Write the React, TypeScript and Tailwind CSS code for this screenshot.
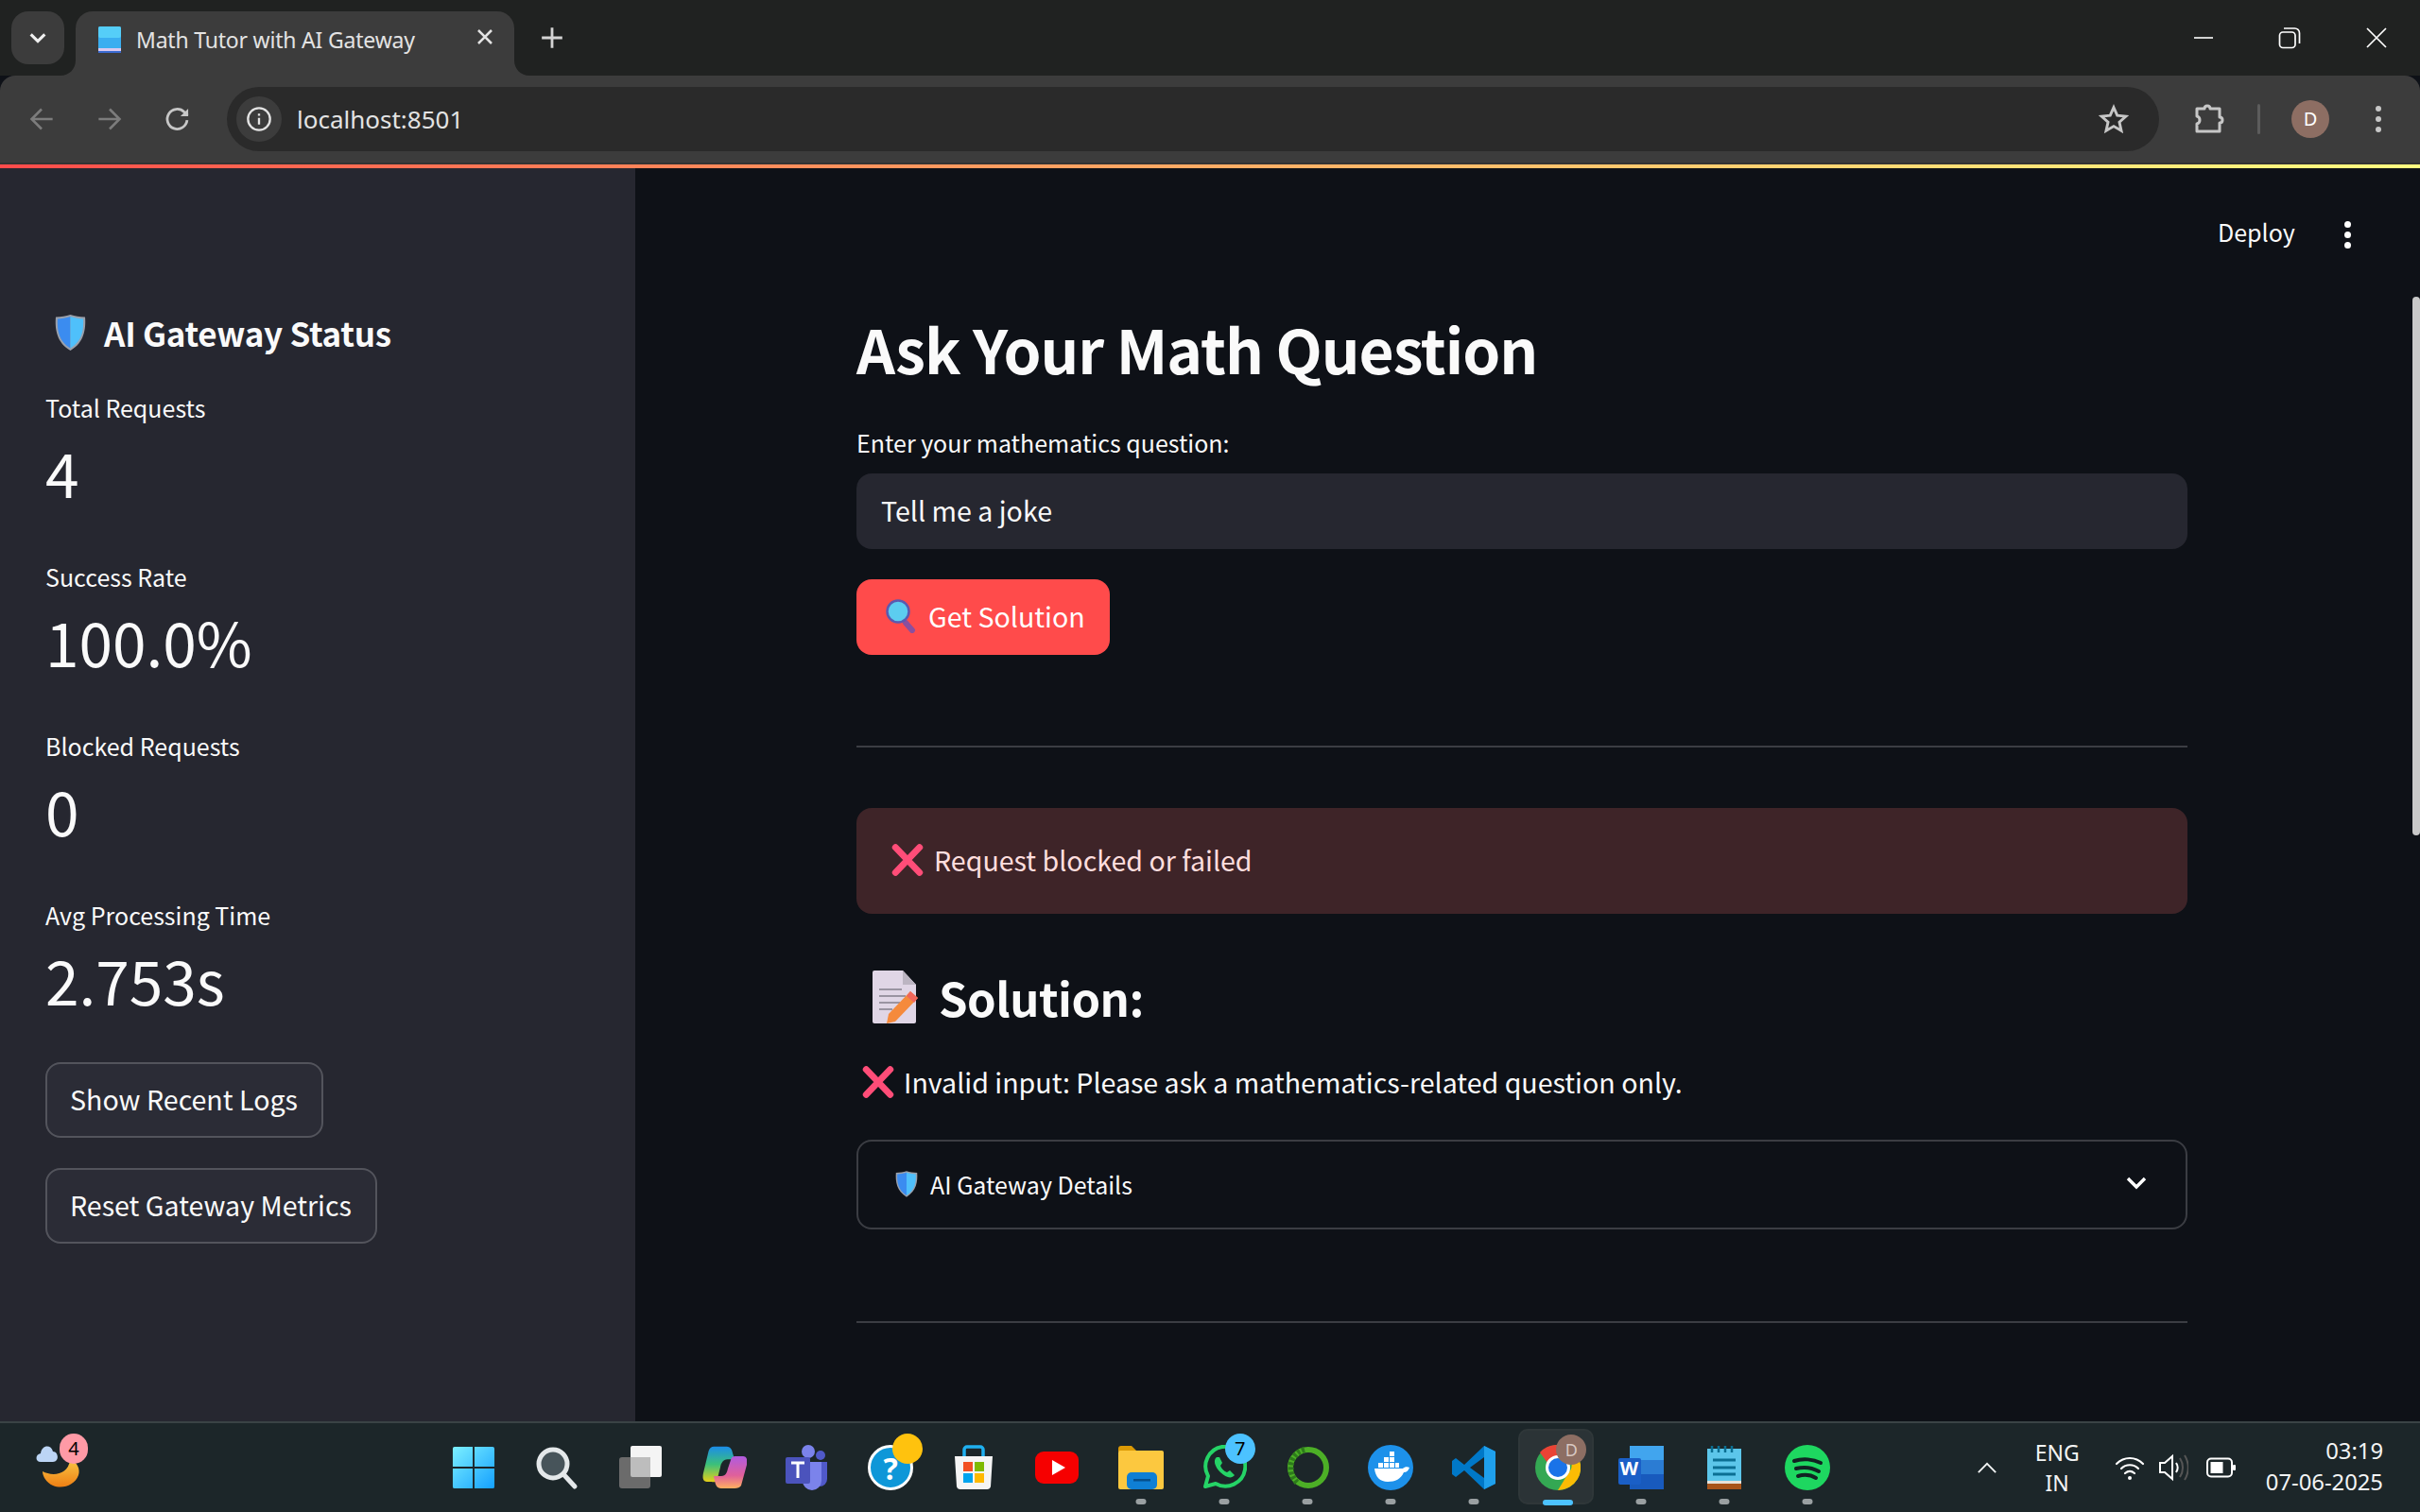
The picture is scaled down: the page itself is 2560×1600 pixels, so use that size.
import React from "react";

const S = "font-['Noto_Sans_CJK_SC',sans-serif]";
const W = "font-['Noto_Sans','Open_Sans',sans-serif]";

function Shield({ className }: { className?: string }) {
  return (
    <svg viewBox="0 0 34 40" className={className}>
      <path d="M17 .5 C22 2 27 3 33 3 C34 16 32 31 17 39.500 C2 31 0 16 1 3 C7 3 12 2 17 .5Z" fill="#9aa0ab" />
      <path d="M17 2.500 C12 4 7 5 3 5 C2.500 17 4 29 17 37Z" fill="#3b8cf0" />
      <path d="M17 2.500 C22 4 27 5 31 5 C31.500 17 30 29 17 37Z" fill="#4fc0fb" />
    </svg>
  );
}

function Cross({ className }: { className?: string }) {
  return (
    <svg viewBox="0 0 32 32" className={className}>
      <path d="M4 3.500 L28 28.500 M28 3.500 L4 28.500" stroke="#ff4d78" strokeWidth="6.5" strokeLinecap="round" fill="none" />
    </svg>
  );
}

function Metric({ label, value }: { label: string; value: string }) {
  return (
    <div className="h-[179px] flex flex-col">
      <div className="text-[25px] leading-[44px] text-[#fafafa]">{label}</div>
      <div className="text-[64px] leading-[93px] text-[#fafafa]">{value}</div>
    </div>
  );
}

function SideButton({ children }: { children: React.ReactNode }) {
  return (
    <div className="h-[80px] w-fit pl-[24px] pr-[25px] pb-[2px] flex items-center rounded-[16px] border-2 border-[#53545c] bg-[#2b2c36] text-[28.6px] leading-[40px] text-[#fafafa] whitespace-nowrap">
      {children}
    </div>
  );
}

function Divider() {
  return <div className="h-[2px] bg-[#3b3d43]" />;
}

function Dot({ on }: { on?: boolean }) {
  return on ? (
    <span className="absolute bottom-[7px] left-1/2 -translate-x-1/2 w-[32px] h-[6px] rounded-full bg-[#4cc2ff]" />
  ) : (
    <span className="absolute bottom-[8px] left-1/2 -translate-x-1/2 w-[11px] h-[6px] rounded-full bg-[#9aa0a2]" />
  );
}

function Badge({ color, text, left }: { color: string; text?: string; left: string }) {
  return (
    <span
      className={`absolute top-[11px] ${left} w-[32px] h-[32px] rounded-full flex items-center justify-center text-[20px] leading-none text-black ${color}`}
    >
      {text}
    </span>
  );
}

function Tile({ children, dot, on }: { children: React.ReactNode; dot?: boolean; on?: boolean }) {
  return (
    <div className="relative w-[88.2px] h-full flex items-center justify-center">
      {on && (
        <span className="absolute top-[6px] left-[3px] w-[80px] h-[80px] rounded-[10px] bg-[#2b3336] border-2 border-[#2f3739]" />
      )}
      {children}
      {dot && <Dot on={on} />}
    </div>
  );
}

const icon = "relative w-[48px] h-[48px]";

export default function App() {
  return (
    <div className={`w-[2560px] h-[1600px] overflow-hidden flex flex-col bg-[#0e1117] ${S}`}>
      {/* title bar */}
      <div className={`h-[80px] bg-[#202221] flex items-start ${W}`}>
        <div className="ml-[12px] mt-[12px] w-[56px] h-[56px] rounded-[18px] bg-[#3c3c3c] flex items-center justify-center">
          <svg viewBox="0 0 24 24" className="w-[22px] h-[22px]" fill="none" stroke="#f0f0f0" strokeWidth="3.4"><path d="M4 8l8 8 8-8" /></svg>
        </div>
        <div className="relative ml-[12px] mt-[12px] w-[464px] h-[68px] rounded-t-[18px] bg-[#3c3c3c] flex items-center pl-[24px] pb-[8px]">
          <svg viewBox="0 0 16 16" className="absolute left-[-16px] bottom-0 w-[16px] h-[16px]"><path d="M16 0 V16 H0 C9 16 16 9 16 0Z" fill="#3c3c3c" /></svg>
          <svg viewBox="0 0 16 16" className="absolute right-[-16px] bottom-0 w-[16px] h-[16px]"><path d="M0 0 V16 H16 C7 16 0 9 0 0Z" fill="#3c3c3c" /></svg>
          <svg viewBox="0 0 24 28" className="w-[24px] h-[28px] shrink-0">
            <rect x="0" y="0" width="24" height="28" rx="2" fill="#3aaef0" />
            <rect x="0" y="0" width="24" height="12" rx="2" fill="#55cef8" />
            <rect x="0" y="23" width="24" height="4" fill="#d9c9ef" />
            <rect x="0" y="26" width="24" height="2" fill="#3a6ad0" />
          </svg>
          <span className="ml-[16px] text-[23px] leading-[30px] text-[#e3e3e3] whitespace-nowrap tracking-[-0.2px]">Math Tutor with AI Gateway</span>
          <svg viewBox="0 0 20 20" className="absolute left-[423px] top-[17px] w-[20px] h-[20px]" stroke="#e3e3e3" strokeWidth="2.6" fill="none"><path d="M3 3l14 14M17 3L3 17" /></svg>
        </div>
        <svg viewBox="0 0 24 24" className="ml-[27px] mt-[27px] w-[26px] h-[26px]" stroke="#d4d4d4" strokeWidth="2.6" fill="none"><path d="M12 2v20M2 12h20" /></svg>
        <div className="ml-auto flex items-center h-[80px] pr-[34px]">
          <svg viewBox="0 0 24 24" className="w-[24px] h-[24px]" stroke="#fff" strokeWidth="1.6" fill="none"><path d="M2 12h20" /></svg>
          <svg viewBox="0 0 24 24" className="ml-[67px] w-[24px] h-[24px]" stroke="#fff" strokeWidth="1.7" fill="none"><rect x="1.5" y="6" width="16.5" height="16.5" rx="3.5" /><path d="M6 2h11.5A5 5 0 0 1 22.5 7v11" /></svg>
          <svg viewBox="0 0 24 24" className="ml-[68px] w-[24px] h-[24px]" stroke="#fff" strokeWidth="1.7" fill="none"><path d="M2 2l20 20M22 2L2 22" /></svg>
        </div>
      </div>
      {/* toolbar */}
      <div className={`h-[92px] bg-[#3c3c3c] rounded-t-[16px] flex items-center ${W}`}>
        <svg viewBox="0 0 24 24" className="ml-[30px] w-[28px] h-[28px]" stroke="#7c7c7c" strokeWidth="2.2" fill="none"><path d="M22 12H3M12 3l-9 9 9 9" /></svg>
        <svg viewBox="0 0 24 24" className="ml-[44px] w-[28px] h-[28px]" stroke="#7c7c7c" strokeWidth="2.2" fill="none"><path d="M2 12h19M12 3l9 9-9 9" /></svg>
        <svg viewBox="0 0 24 24" className="ml-[44px] w-[28px] h-[28px]" stroke="#c7c7c7" strokeWidth="2.4" fill="none"><path d="M20.5 13a9 9 0 1 1-2.6-7.4L21 8.5" /><path d="M21.5 2.5v7h-7" fill="#c7c7c7" stroke="none" /></svg>
        <div className="ml-[38px] w-[2044px] h-[68px] rounded-full bg-[#2a2a2a] flex items-center pl-[10px]">
          <div className="w-[48px] h-[48px] rounded-full bg-[#3c3c3c] flex items-center justify-center">
            <svg viewBox="0 0 24 24" className="w-[28px] h-[28px]" stroke="#e3e3e3" strokeWidth="2" fill="none"><circle cx="12" cy="12" r="10" /><path d="M12 11v6M12 7v2" /></svg>
          </div>
          <span className="ml-[16px] text-[26px] leading-[34px] text-[#e3e3e3]">localhost:8501</span>
          <svg viewBox="0 0 24 24" className="ml-auto mr-[32px] w-[32px] h-[32px]" stroke="#c7c7c7" strokeWidth="2.2" fill="none"><path d="M12 2.8l2.8 6.3 6.9.7-5.2 4.6 1.5 6.8-6-3.500-6 3.500 1.500-6.800-5.200-4.600 6.900-.7z" /></svg>
        </div>
        <svg viewBox="0 0 32 32" className="ml-[37px] w-[32px] h-[32px]" stroke="#c7c7c7" strokeWidth="3" fill="none"><path d="M3 5h8c0-4 6-4 6 0h10v9c4 0 4 6 0 6v9H3v-8c4-1 4-7 0-8z" strokeLinejoin="round" /></svg>
        <div className="ml-[35px] w-[3px] h-[32px] rounded-full bg-[#5c5c5c]" />
        <div className="ml-[33px] w-[40px] h-[40px] rounded-full bg-[#8d6e63] flex items-center justify-center text-[20px] text-white">D</div>
        <div className="ml-[49px] flex flex-col gap-[5px]">
          <span className="w-[6px] h-[6px] rounded-full bg-[#c7c7c7]" />
          <span className="w-[6px] h-[6px] rounded-full bg-[#c7c7c7]" />
          <span className="w-[6px] h-[6px] rounded-full bg-[#c7c7c7]" />
        </div>
      </div>
      <div className="h-[2px] bg-[#333333]" />
      <div className="h-[4px] bg-gradient-to-r from-[#ff4b4b] to-[#fffd80]" />
      {/* page */}
      <div className="relative flex-1 flex min-h-0">
        <aside className="w-[672px] bg-[#262730] pt-[147px] pl-[48px]">
          <div className="flex items-center h-[54px]">
            <Shield className="ml-[10px] w-[33px] h-[40px]" />
            <span className="ml-[19px] text-[35px] leading-[54px] font-bold tracking-[-0.3px] text-[#fafafa] whitespace-nowrap">AI Gateway Status</span>
          </div>
          <div className="mt-[30px]">
            <Metric label="Total Requests" value="4" />
            <Metric label="Success Rate" value="100.0%" />
            <Metric label="Blocked Requests" value="0" />
            <Metric label="Avg Processing Time" value="2.753s" />
          </div>
          <div className="mt-[-1px] flex flex-col gap-[32px]">
            <SideButton>Show Recent Logs</SideButton>
            <SideButton>Reset Gateway Metrics</SideButton>
          </div>
        </aside>
        <main className="flex-1 min-w-0 pl-[234px] pr-[246px] text-[#fafafa]">
          <div className="absolute top-[45px] left-[2346px] text-[25px] leading-[44px] whitespace-nowrap">Deploy</div>
          <div className="absolute top-[56px] left-[2480px] flex flex-col gap-[4px]">
            <span className="w-[7px] h-[7px] rounded-full bg-white" />
            <span className="w-[7px] h-[7px] rounded-full bg-white" />
            <span className="w-[7px] h-[7px] rounded-full bg-white" />
          </div>
          <div className="absolute top-[136px] left-[2552px] w-[8px] h-[570px] rounded-full bg-[#c8c8c8]" />
          <h2 className="pt-[145px] text-[64px] leading-[90px] font-bold tracking-[-1px] whitespace-nowrap">Ask Your Math Question</h2>
          <div className="mt-[33px] text-[25px] leading-[44px]">Enter your mathematics question:</div>
          <div className="mt-[11px] h-[80px] rounded-[16px] bg-[#262730] flex items-center pl-[26px] pb-[2px] text-[28.6px] leading-[44px]">Tell me a joke</div>
          <div className="mt-[32px] w-[268px] h-[80px] rounded-[16px] bg-[#ff4b4b] flex items-center pl-[31px] pb-[2px] text-[28.6px] leading-[44px] text-white">
            <svg viewBox="0 0 32 36" className="w-[32px] h-[36px] shrink-0">
              <path d="M21 25l7 8" stroke="#8a4f9e" strokeWidth="6" strokeLinecap="round" />
              <circle cx="13" cy="13" r="11.5" fill="#5ccdf0" stroke="#5a5ab0" strokeWidth="2.5" />
            </svg>
            <span className="ml-[13px] whitespace-nowrap">Get Solution</span>
          </div>
          <div className="mt-[96px]"><Divider /></div>
          <div className="mt-[64px] h-[112px] rounded-[16px] bg-[#3e2428] flex items-center pl-[37px] pb-[2px] text-[28.6px] leading-[44px] text-[#ffdede]">
            <Cross className="w-[34px] h-[34px] shrink-0" />
            <span className="ml-[11px] whitespace-nowrap">Request blocked or failed</span>
          </div>
          <div className="mt-[55px] flex items-center h-[66px] pl-[16px]">
            <svg viewBox="0 0 50 58" className="w-[50px] h-[58px] shrink-0">
              <path d="M1 3a2 2 0 0 1 2-2h30l14 15v39a2 2 0 0 1-2 2H3a2 2 0 0 1-2-2z" fill="#e0d6e6" />
              <path d="M33 1l14 15H33z" fill="#bcb5c2" />
              <path d="M8 21h24M8 28h28M8 35h22M8 42h14" stroke="#9a94a2" strokeWidth="2.2" />
              <path d="M41 23l8 7-24 25-9 2 2-10z" fill="#f58a3c" />
              <path d="M41 23l8 7-4 5-8-7z" fill="#f0665a" />
            </svg>
            <span className="ml-[21px] text-[49px] leading-[66px] font-bold tracking-[-0.5px] whitespace-nowrap">Solution:</span>
          </div>
          <div className="mt-[35px] flex items-center h-[44px] pl-[6px] text-[28.6px] leading-[44px]">
            <Cross className="w-[34px] h-[34px] shrink-0" />
            <span className="ml-[10px] whitespace-nowrap">Invalid input: Please ask a mathematics-related question only.</span>
          </div>
          <div className="mt-[39px] h-[95px] rounded-[16px] border-2 border-[#3b3d43] flex items-center pl-[39px] pr-[40px] pb-[2px]">
            <Shield className="w-[24px] h-[28px] shrink-0" />
            <span className="ml-[13px] text-[25px] leading-[44px] whitespace-nowrap">AI Gateway Details</span>
            <svg viewBox="0 0 24 16" className="ml-auto mb-[2px] w-[24px] h-[16px]" stroke="#fff" strokeWidth="3.4" fill="none"><path d="M3 3l9 9 9-9" /></svg>
          </div>
          <div className="mt-[97px]"><Divider /></div>
        </main>
      </div>
      {/* taskbar */}
      <div className={`relative h-[96px] bg-[#1c2629] border-t-2 border-[#3a4345] flex items-stretch ${W}`}>
        <div className="relative w-[457px] shrink-0">
          <svg viewBox="0 0 50 48" className="absolute left-[38px] top-[22px] w-[50px] h-[48px]">
            <defs><linearGradient id="m1" x1="0" y1="0" x2="0" y2="1"><stop offset="0" stopColor="#f8c544" /><stop offset="1" stopColor="#ee7f14" /></linearGradient></defs>
            <path d="M36 17 C44 19 47 27 45 33 C41 44 28 48 18 44 C11 41 7 34 7 29 C16 34 34 34 36 17Z" fill="url(#m1)" />
            <path d="M5 19c-6 0-6-8 0-9 1-9 11-10 13-2 6 0 7 11 0 11z" fill="#bcd5f5" />
          </svg>
          <span className="absolute left-[63px] top-[11px] w-[30px] h-[32px] rounded-full bg-[#ff9aa6] flex items-center justify-center text-[20px] leading-none text-black">4</span>
        </div>
        <Tile>
          <svg viewBox="0 0 48 48" className="w-[46px] h-[46px]">
            <defs><linearGradient id="w1" x1="0" y1="0" x2="1" y2="1"><stop offset="0" stopColor="#7cf0ff" /><stop offset="1" stopColor="#14a0ff" /></linearGradient></defs>
            <path d="M1 3a2 2 0 0 1 2-2h20v22H1zM25 1h20a2 2 0 0 1 2 2v20H25zM1 25h22v22H3a2 2 0 0 1-2-2zM25 25h22v20a2 2 0 0 1-2 2H25z" fill="url(#w1)" />
          </svg>
        </Tile>
        <Tile>
          <svg viewBox="0 0 48 48" className={icon}><circle cx="20" cy="20" r="15" fill="#47545a" stroke="#e4e8ea" strokeWidth="5" /><path d="M31 31l12 13" stroke="#e4e8ea" strokeWidth="5" strokeLinecap="round" /></svg>
        </Tile>
        <Tile>
          <svg viewBox="0 0 48 48" className={icon}><rect x="14" y="1" width="33" height="33" rx="2" fill="#f4f4f4" /><rect x="2" y="13" width="33" height="33" rx="3" fill="#6b6b6b" /><path d="M14 13h21v21H16a2 2 0 0 1-2-2z" fill="#bdbdbd" /></svg>
        </Tile>
        <Tile>
          <svg viewBox="0 0 48 48" className={icon}>
            <defs>
              <linearGradient id="c1" x1="0" y1="0" x2="0" y2="1"><stop offset="0" stopColor="#1c8de8" /><stop offset=".5" stopColor="#3bc07a" /><stop offset="1" stopColor="#e8d018" /></linearGradient>
              <linearGradient id="c2" x1="0" y1="0" x2="0" y2="1"><stop offset="0" stopColor="#b05be0" /><stop offset=".6" stopColor="#e0609a" /><stop offset="1" stopColor="#ffb060" /></linearGradient>
            </defs>
            <path d="M14 3h14c5 0 6 4 7 8l2 6H29c-5 0-7 4-8 9l-3 12c-1 4-2 5-7 4H6c-4 0-5-4-4-9L8 8c1-3 3-5 6-5z" transform="translate(0 -1) scale(.95)" fill="url(#c1)" />
            <path d="M34 45H20c-5 0-6-4-7-8l-1-5h8c5 0 6-4 7-8l3-9c1-4 3-4 7-4h6c4 0 5 4 4 9l-6 22c-1 2-4 3-7 3z" transform="translate(1 1)" fill="url(#c2)" />
          </svg>
        </Tile>
        <Tile>
          <svg viewBox="0 0 48 48" className={icon}>
            <circle cx="25" cy="7" r="7" fill="#7b83eb" /><circle cx="38" cy="11" r="5" fill="#5059c9" />
            <path d="M33 18h12v18a8 8 0 0 1-8 8h-4z" fill="#5059c9" /><path d="M15 18h24v20a10 10 0 0 1-20 0z" fill="#7b83eb" />
            <rect x="1" y="13" width="26" height="28" rx="2" fill="#4b53bc" />
            <path d="M7 19h14M14 19v16" stroke="#fff" strokeWidth="3" />
          </svg>
        </Tile>
        <Tile>
          <svg viewBox="0 0 48 48" className={icon}><circle cx="24" cy="24" r="22.5" fill="#0e97d8" stroke="#fff" strokeWidth="3" /></svg>
          <span className="absolute top-[28px] left-0 w-full text-center text-[32px] leading-[40px] font-bold text-white">?</span>
          <Badge color="bg-[#ffc20e]" left="left-[46px]" />
        </Tile>
        <Tile>
          <svg viewBox="0 0 48 48" className={icon}>
            <path d="M4 12h40l-2 32a4 4 0 0 1-4 3H10a4 4 0 0 1-4-3z" fill="#f5f5f5" />
            <path d="M14 12V5a3 3 0 0 1 3-3h14a3 3 0 0 1 3 3v7" fill="none" stroke="#1fb0f0" strokeWidth="3.5" />
            <rect x="13" y="18" width="10" height="10" fill="#f25022" /><rect x="25" y="18" width="10" height="10" fill="#7fba00" /><rect x="13" y="30" width="10" height="10" fill="#00a4ef" /><rect x="25" y="30" width="10" height="10" fill="#ffb900" />
          </svg>
        </Tile>
        <Tile>
          <svg viewBox="0 0 48 48" className={icon}><rect x="1" y="7" width="46" height="34" rx="9" fill="#f60000" /><path d="M19 16l14 8-14 8z" fill="#fff" /></svg>
        </Tile>
        <Tile dot>
          <svg viewBox="0 0 48 48" className={icon}>
            <path d="M0 4a3 3 0 0 1 3-3h11l6 6H0z" fill="#dc9a05" />
            <rect x="0" y="6" width="48" height="41" rx="2" fill="#fcc83f" />
            <rect x="9" y="29" width="32" height="18" rx="5" fill="#0f7fd4" />
            <rect x="16" y="36" width="18" height="2.5" fill="#064f8c" />
          </svg>
        </Tile>
        <Tile dot>
          <svg viewBox="0 0 48 48" className={icon}>
            <path d="M4 44l3-11A21 21 0 1 1 15 41z" fill="none" stroke="#25d366" strokeWidth="4" strokeLinejoin="round" />
            <path d="M16 13c-4 3-2 10 4 16s12 7 15 3l-5-5-3 2c-3-1-6-4-7-7l2-3-3-6z" fill="#25d366" />
          </svg>
          <Badge color="bg-[#4cc2ff]" text="7" left="left-[45px]" />
        </Tile>
        <Tile dot>
          <svg viewBox="0 0 48 48" className={icon}>
            <circle cx="25" cy="24" r="19" fill="none" stroke="#4caf26" strokeWidth="6" />
            <path d="M21 5C10 8 5 18 7 29c1 5 4 9 7 12" fill="none" stroke="#2d7a1b" strokeWidth="6" strokeDasharray="3 2" />
          </svg>
        </Tile>
        <Tile dot>
          <svg viewBox="0 0 48 48" className={icon}>
            <circle cx="24" cy="24" r="24" fill="#1d91ea" />
            <path d="M7 25h30c2-2 5-2 7-1-1 3-3 5-6 5-3 7-9 10-17 10-8 0-13-5-14-14z" fill="#fff" />
            <path d="M11 19h5v5h-5zM17 19h5v5h-5zM23 19h5v5h-5zM17 13h5v5h-5zM23 13h5v5h-5zM23 7h5v5h-5zM29 19h4v5h-4z" fill="#fff" />
          </svg>
        </Tile>
        <Tile dot>
          <svg viewBox="0 0 48 48" className={icon}>
            <path d="M35 1l12 6v34l-12 6-21-20-9 7-4-3V17l4-3 9 7z" fill="#0078c8" />
            <path d="M35 1l12 6v34l-12 6z" fill="#1fa0ec" />
            <path d="M35 13v22L20 24z" fill="#1c2629" />
          </svg>
        </Tile>
        <Tile dot on>
          <svg viewBox="0 0 48 48" className={icon}>
            <circle cx="24" cy="24" r="24" fill="#34a853" />
            <path d="M24 0a24 24 0 0 1 21 12H24a12 12 0 0 0-11 7L5 8A24 24 0 0 1 24 0z" fill="#ea4335" />
            <path d="M45 12a24 24 0 0 1-21 36l11-18a12 12 0 0 0-1-18z" fill="#fbbc04" />
            <circle cx="24" cy="24" r="11.5" fill="#1a73e8" stroke="#fff" strokeWidth="3" />
          </svg>
          <span className="absolute top-[12px] left-[43px] w-[32px] h-[32px] rounded-full bg-[#8d6e63] flex items-center justify-center text-[18px] text-[#d8c8c2]">D</span>
        </Tile>
        <Tile dot>
          <svg viewBox="0 0 48 48" className={icon}>
            <rect x="12" y="1" width="36" height="16" fill="#41a5ee" /><rect x="12" y="16" width="36" height="16" fill="#2b7cd3" /><rect x="12" y="31" width="36" height="16" fill="#185abd" />
            <rect x="0" y="14" width="24" height="28" rx="2" fill="#1a5fc7" />
          </svg>
          <span className="absolute top-[35px] left-[22px] text-[20px] leading-[26px] font-bold text-white">W</span>
        </Tile>
        <Tile dot>
          <svg viewBox="0 0 48 48" className={icon}>
            <rect x="6" y="4" width="36" height="34" fill="#5cc6ea" />
            <rect x="6" y="38" width="36" height="3" fill="#e6e2da" /><rect x="6" y="41" width="36" height="6" fill="#a8541a" />
            <path d="M11 1v7M18 1v7M25 1v7M32 1v7" stroke="#0b6f93" strokeWidth="2.5" />
            <path d="M12 16h24M12 24h24M12 31h24" stroke="#0b6f93" strokeWidth="3" />
          </svg>
        </Tile>
        <Tile dot>
          <svg viewBox="0 0 48 48" className={icon}>
            <circle cx="24" cy="24" r="24" fill="#1ed760" />
            <path d="M10 17c9-3 20-2 28 2M12 25c8-2 17-1 24 3M14 33c7-2 14-1 19 2" fill="none" stroke="#122" strokeWidth="4" strokeLinecap="round" />
          </svg>
        </Tile>
        <div className="relative flex-1 flex items-center text-[#f2f4f4]">
          <svg viewBox="0 0 24 14" className="ml-[135px] w-[22px] h-[13px]" stroke="#f2f4f4" strokeWidth="2" fill="none"><path d="M2 12L12 2l10 10" /></svg>
          <div className="ml-[35px] w-[56px] flex flex-col items-center text-[23px] leading-[32px]"><span>ENG</span><span>IN</span></div>
          <svg viewBox="0 0 32 28" className="ml-[33px] w-[32px] h-[28px]" stroke="#fff" strokeWidth="2.2" fill="none" strokeLinecap="round"><path d="M2 10c8-8 20-8 28 0M7 15c5-5 13-5 18 0M11 20c3-2.500 7-2.500 10 0" /><circle cx="16" cy="25" r="2" fill="#fff" stroke="none" /></svg>
          <svg viewBox="0 0 32 30" className="ml-[14px] w-[32px] h-[30px]" stroke="#fff" strokeWidth="2" fill="none"><path d="M2 10h5l8-7v24l-8-7H2zM19 10c2 3 2 7 0 10" /><path d="M23 5c4 6 4 14 0 20M28 2c5 8 5 18 0 26" stroke="#555" /></svg>
          <svg viewBox="0 0 32 22" className="ml-[19px] w-[32px] h-[22px]" fill="none"><rect x="1" y="1.500" width="26" height="19" rx="4" stroke="#fff" strokeWidth="2" /><rect x="4.500" y="5" width="13" height="12" fill="#fff" /><rect x="28" y="8" width="3" height="6" rx="1" fill="#fff" /></svg>
          <div className="ml-auto pr-[39px] pb-[2px] flex flex-col items-end text-[23.8px] leading-[33px] whitespace-nowrap"><span>03:19</span><span>07-06-2025</span></div>
        </div>
      </div>
    </div>
  );
}
